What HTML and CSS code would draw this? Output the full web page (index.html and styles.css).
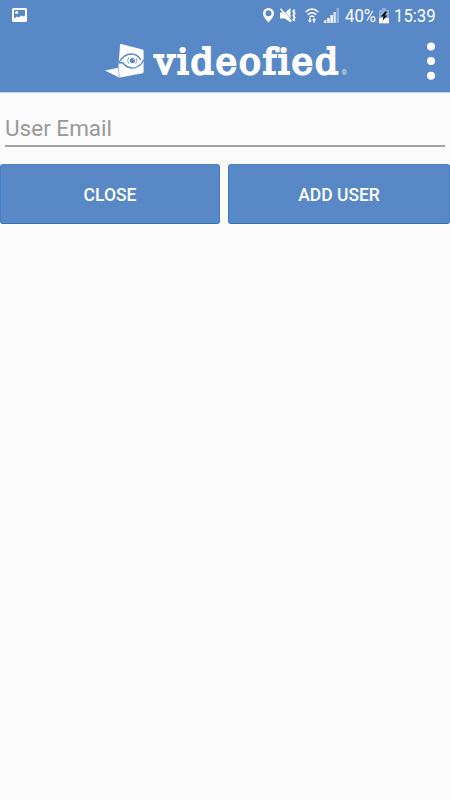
FILE: index.html
```html
<!DOCTYPE html>
<html lang="en">
<head>
<meta charset="utf-8">
<meta name="viewport" content="width=device-width, initial-scale=1">
<title>Videofied</title>
<link rel="stylesheet" href="styles.css">
</head>
<body>
<header class="header">
  <div class="status">
    <svg class="photo" width="15" height="14" viewBox="0 0 15 14"><path fill="#fff" fill-rule="evenodd" d="M1 0h13l1 1v12l-1 1H1l-1-1V1zM2 2v8.5l3-2 2 1 2-2 2 1 2-1V2z"/><circle cx="4.7" cy="4.5" r="1.6" fill="#fff"/></svg>
    <div class="indicators">
      <svg class="pin" width="11" height="15" viewBox="0 0 11 15"><path fill="#fff" fill-rule="evenodd" d="M5.5 0A5.4 5.4 0 0 0 0 5.5C0 9 5.5 14.5 5.5 14.5S11 9 11 5.5A5.4 5.4 0 0 0 5.5 0zm0 2.3a3 3 0 1 1 0 6 3 3 0 0 1 0-6z"/></svg>
      <svg class="mute" width="17" height="15" viewBox="0 0 17 15"><path fill="#fff" d="M0 4.5h5L10.5 0v14.5L5 10.5H0z"/><path d="M1.5 0l10 11.5" stroke="#5888c6" stroke-width=".7"/><path d="M.5.8l11 12.7" stroke="#fff" stroke-width="1.4"/><path d="M14.7 1.5l-1.4 2 1.4 2-1.4 2 1.4 2-1.4 2 1.4 1.5" fill="none" stroke="#fff" stroke-width="1.8"/></svg>
      <svg class="wifi" width="14" height="16" viewBox="0 0 14 16"><path d="M.6 4Q7-2 13.4 4M2.7 6.6Q7 2.8 11.3 6.6M4.7 9Q7 7 9.3 9" fill="none" stroke="#fff" stroke-width="1.5"/><path fill="#fff" d="M4.2 9.8h1.4v2.4H7l-2.1 2.5-2.1-2.5h1.4zM9.8 14.7H8.4v-2.4H7l2.1-2.5 2.1 2.5H9.8z"/></svg>
      <svg class="signal" width="15" height="15" viewBox="0 0 15 15"><path fill="#fff" d="M0 13l2.2-1.5V15H0zM3.2 10h2.4v5H3.2zM6.4 7h2.4v8H6.4z"/><path fill="#dfe9f5" d="M9.5 4h2.3v11H9.5z"/><path fill="#91b1da" d="M12.6 0H15v15h-2.4z"/></svg>
      <span class="percent">40%</span>
      <svg class="battery" width="10" height="16" viewBox="0 0 10 16"><path fill="#91b1da" d="M3 0h4v2h3v8H0V2h3z"/><path fill="#fff" d="M0 10h10v5.3H0z"/><path fill="#101010" d="M6.7 3L1.8 8.6h2.7l-1 4.1L8.4 7.6H5.8L8 4z"/></svg>
      <span class="time">15:39</span>
    </div>
  </div>
  <div class="appbar">
    <svg class="brand" width="250" height="40" viewBox="0 0 250 40" role="img" aria-label="videofied">
      <path fill="#fff" d="M16.2 4q-1.2-.4-1.2 1L13.4 27.7 0 30.6l13.7 6.6q.5.4 1.2.3l22.5-4.3q1.2-.2 1.2-1.5V10.8q0-1-1.1-1.4z"/>
      <path d="M13.3 27.5l1 9.5" fill="none" stroke="#5888c6" stroke-width=".6"/>
      <path d="M14.2 22Q19 14 26.5 14 32.5 14 35.8 20M17.5 22.5Q22 28.2 28 28.2 34.5 28 39 19.8M17.8 22.5L14 23" fill="none" stroke="#5888c6" stroke-width="1.3"/>
      <path d="M23.7 17.3Q21.5 20.7 24 24M31.2 18Q33 21.3 30.4 24.2" fill="none" stroke="#5888c6" stroke-width=".7"/>
      <circle cx="27.5" cy="20.6" r="2.7" fill="#5888c6"/><circle cx="29" cy="19.6" r=".7" fill="#fff"/>
      <text class="wordmark" transform="translate(49.5 34) scale(1.1 1.08)" x="0" y="0" textLength="167" lengthAdjust="spacing">videofied</text>
      <text class="registered" x="236.5" y="34.7">®</text>
    </svg>
    <svg class="menu" width="8" height="38" viewBox="0 0 8 38" fill="#fff"><circle cx="4" cy="4.5" r="4"/><circle cx="4" cy="19" r="4"/><circle cx="4" cy="33.8" r="4"/></svg>
  </div>
</header>
<main>
  <input class="email" type="text" placeholder="User Email" aria-label="User Email">
  <div class="actions">
    <button class="button">CLOSE</button>
    <button class="button">ADD USER</button>
  </div>
</main>
</body>
</html>
```
FILE: styles.css
```css
* { box-sizing: border-box; }
body {
  margin: 0;
  min-height: 800px;
  background: #fbfbfb;
  font-family: Roboto, sans-serif;
}
svg { display: block; flex: none; overflow: visible; }
.header {
  height: 93px;
  background: #5888c6;
  border-bottom: 1px solid #c4d5ef;
  color: #fff;
}
.status {
  display: flex;
  justify-content: space-between;
  height: 32px;
  padding: 8px 13px 0 12px;
}
.indicators { display: flex; height: 16px; }
.mute { margin-left: 6px; }
.wifi { margin-left: 8px; }
.signal { margin-left: 5px; }
.percent, .time {
  font-size: 19px;
  line-height: 16px;
  white-space: nowrap;
  transform-origin: left;
  transform: scaleX(.88);
}
.percent { width: 31px; margin-left: 6px; }
.battery { margin-left: 3px; }
.time { width: 43px; margin-left: 5px; }
.appbar {
  display: flex;
  justify-content: space-between;
  height: 60px;
  padding: 8px 15px 0 105px;
}
.menu { margin-top: 2px; }
.wordmark {
  font: 33px "DejaVu Serif", serif;
  fill: #fff;
  stroke: #fff;
  stroke-width: 2px;
  font-variant-ligatures: none;
}
.registered { font: 7px Roboto, sans-serif; fill: #dce7f5; }
.email {
  display: block;
  width: 440px;
  height: 34px;
  margin: 20px 5px 0;
  padding: 0 0 2px;
  border: 0;
  border-bottom: 2px solid #a2a2a2;
  border-radius: 0;
  outline: 0;
  background: transparent;
  font: 22.5px Roboto, sans-serif;
}
.email::placeholder { color: #999; opacity: 1; }
.actions {
  display: grid;
  grid-template-columns: 220px 222px;
  gap: 8px;
  margin-top: 17px;
}
.button {
  height: 60px;
  padding: 2px 0 0;
  border: 1px solid #427fc5;
  border-top-color: #4c84c5;
  border-bottom-color: #2c74b8;
  border-radius: 3px;
  background: #5888c6;
  color: #fff;
  font: 500 17.5px Roboto, sans-serif;
}
```
